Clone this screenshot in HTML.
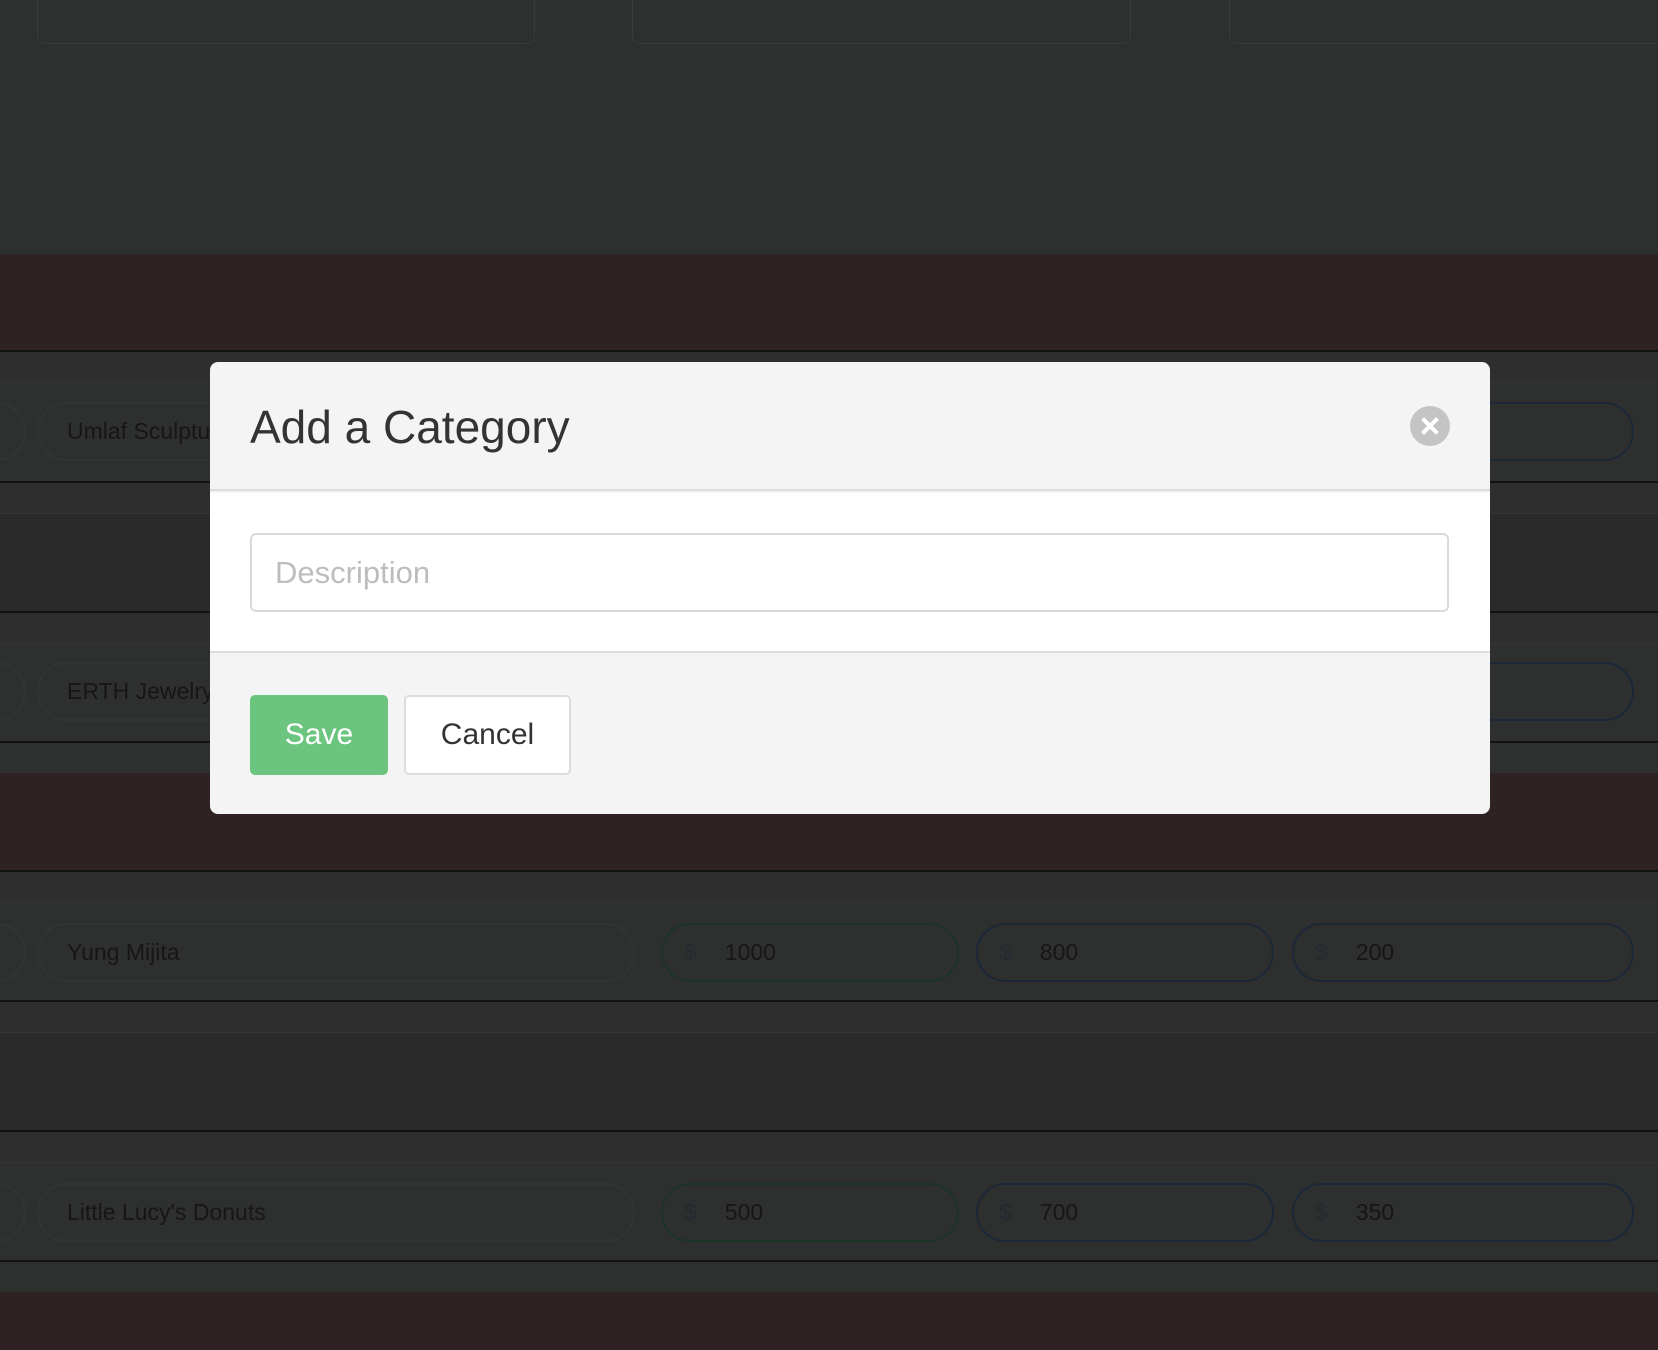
<!DOCTYPE html>
<html><head><meta charset="utf-8"><style>
*{box-sizing:border-box;margin:0;padding:0}
body{width:1658px;height:1350px;overflow:hidden;background:#2e2f2f;position:relative;font-family:"Liberation Sans",sans-serif}
.a{position:absolute}
.card{position:absolute;top:-10px;height:54px;border:1px solid #3a3b3b;border-radius:8px}
.brown{position:absolute;left:0;width:1658px;background:#2e2322}
.line{position:absolute;left:0;width:1658px;height:2px;background:#121212}
.strip{position:absolute;left:0;width:1658px;border-bottom:1px solid #353535;background:#2e2e2e}
.dark{position:absolute;left:0;width:1658px;background:#2b2a2b}
.pill{position:absolute;height:59px;border:2px solid #333434;border-radius:30px;color:#161616;font-size:23px;line-height:55px;padding-left:28px}
.amt{border-color:#1b2838}
.amt.g{border-color:#1c3326}
.amt span{color:#242a30;margin-right:28px}
.circ{position:absolute;left:-40px;width:66px;height:59px;border:2px solid #333434;border-radius:30px}
</style></head><body>
<div class="card" style="left:37px;width:498px"></div>
<div class="card" style="left:632px;width:499px"></div>
<div class="card" style="left:1229px;width:460px"></div>

<div class="brown" style="top:254px;height:96px"></div>
<div class="line" style="top:350px"></div>
<div class="strip" style="top:352px;height:31px"></div>
<div class="line" style="top:481px"></div>
<div class="strip" style="top:483px;height:31px"></div>
<div class="dark" style="top:514px;height:97px"></div>
<div class="line" style="top:611px"></div>
<div class="strip" style="top:613px;height:31px"></div>
<div class="line" style="top:741px"></div>
<div class="brown" style="top:773px;height:97px"></div>
<div class="line" style="top:870px"></div>
<div class="strip" style="top:872px;height:31px"></div>
<div class="line" style="top:1000px"></div>
<div class="strip" style="top:1002px;height:31px"></div>
<div class="dark" style="top:1033px;height:97px"></div>
<div class="line" style="top:1130px"></div>
<div class="strip" style="top:1132px;height:31px"></div>
<div class="line" style="top:1260px"></div>
<div class="brown" style="top:1292px;height:58px"></div>

<div class="circ" style="top:402px"></div>
<div class="pill" style="left:37px;top:402px;width:598px">Umlaf Sculpture</div>
<div class="pill amt" style="left:1292px;top:402px;width:342px"></div>
<div class="circ" style="top:662px"></div>
<div class="pill" style="left:37px;top:662px;width:598px">ERTH Jewelry</div>
<div class="pill amt" style="left:1292px;top:662px;width:342px"></div>
<div class="circ" style="top:923px"></div>
<div class="pill" style="left:37px;top:923px;width:598px">Yung Mijita</div>
<div class="pill amt g" style="left:661px;top:923px;width:298px;padding-left:21px"><span>$</span>1000</div>
<div class="pill amt" style="left:976px;top:923px;width:298px;padding-left:21px"><span>$</span>800</div>
<div class="pill amt" style="left:1292px;top:923px;width:342px;padding-left:21px"><span>$</span>200</div>
<div class="circ" style="top:1183px"></div>
<div class="pill" style="left:37px;top:1183px;width:598px">Little Lucy's Donuts</div>
<div class="pill amt g" style="left:661px;top:1183px;width:298px;padding-left:21px"><span>$</span>500</div>
<div class="pill amt" style="left:976px;top:1183px;width:298px;padding-left:21px"><span>$</span>700</div>
<div class="pill amt" style="left:1292px;top:1183px;width:342px;padding-left:21px"><span>$</span>350</div>

<div class="a" style="left:210px;top:362px;width:1280px;height:452px;background:#f4f4f4;border-radius:8px;overflow:hidden">
  <div class="a" style="left:0;top:0;width:1280px;height:129px;border-bottom:2px solid #dcdcdc"></div>
  <div class="a" style="left:40px;top:37px;font-size:46px;color:#333;line-height:56px">Add a Category</div>
  <div class="a" style="left:1200px;top:44px;width:40px;height:40px;border-radius:50%;background:#c4c4c4">
    <svg width="40" height="40" viewBox="0 0 40 40"><path d="M14 14L26 26M26 14L14 26" stroke="#fff" stroke-width="4" stroke-linecap="square"/></svg>
  </div>
  <div class="a" style="left:0;top:131px;width:1280px;height:160px;background:#fff;border-bottom:2px solid #dcdcdc"></div>
  <div class="a" style="left:40px;top:171px;width:1199px;height:79px;border:2px solid #dadada;border-radius:6px;background:#fff;color:#bdbdbd;font-size:31px;line-height:75px;padding-left:23px">Description</div>
  <div class="a" style="left:40px;top:333px;width:138px;height:80px;background:#6cc57f;border-radius:5px;color:#fff;font-size:30px;line-height:80px;text-align:center">Save</div>
  <div class="a" style="left:194px;top:333px;width:167px;height:80px;background:#fff;border:2px solid #dcdcdc;border-radius:5px;color:#333;font-size:30px;line-height:76px;text-align:center">Cancel</div>
</div>
</body></html>
